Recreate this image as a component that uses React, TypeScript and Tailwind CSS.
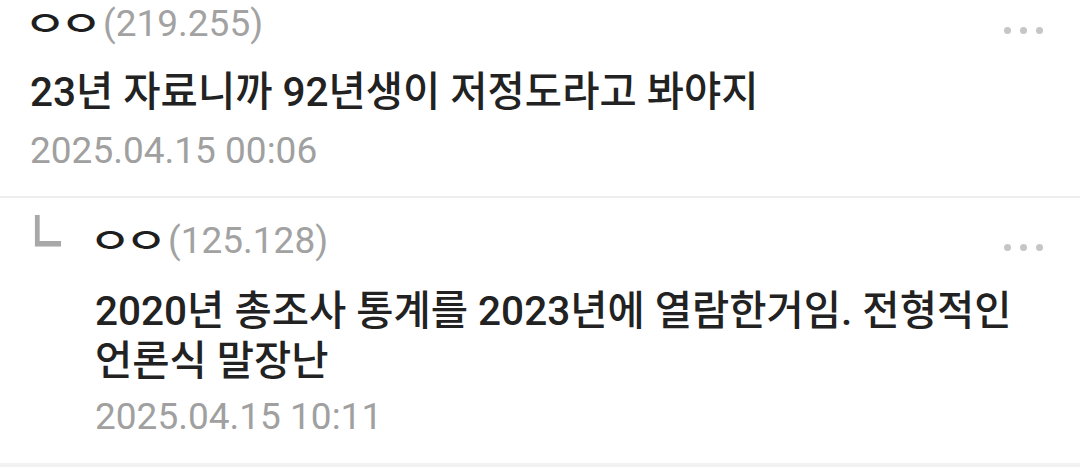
import React from 'react';

type Comment = {
	nick: string;
	ip: string;
	body: string;
	date: string;
	reply?: boolean;
};

const comments: Comment[] = [
	{
		nick: 'ㅇㅇ',
		ip: '(219.255)',
		body: '23년 자료니까 92년생이 저정도라고 봐야지',
		date: '2025.04.15 00:06',
	},
	{
		nick: 'ㅇㅇ',
		ip: '(125.128)',
		body: '2020년 총조사 통계를 2023년에 열람한거임. 전형적인 언론식 말장난',
		date: '2025.04.15 10:11',
		reply: true,
	},
];

const MoreDots = () => (
	<div className="flex gap-[9px] mt-[12px]">
		<span className="w-[7px] h-[7px] rounded-full bg-[#c6c6c6]" />
		<span className="w-[7px] h-[7px] rounded-full bg-[#c6c6c6]" />
		<span className="w-[7px] h-[7px] rounded-full bg-[#c6c6c6]" />
	</div>
);

// nickname glyphs sit in fixed cells so the jamo keep an even pitch
const Nick = ({ text }: { text: string }) => (
	<span className="flex -ml-[3px]">
		{text.split('').map((ch, i) => (
			<span
				key={i}
				className="w-[36px] flex justify-center text-[#1e1e1e] text-[47px] leading-[48px] font-medium scale-y-[0.72]"
			>
				{ch}
			</span>
		))}
	</span>
);

const CommentBody = ({ c }: { c: Comment }) => (
	<div className="flex-1 min-w-0">
		<div className="flex justify-between items-center h-[48px]">
			<div className="flex items-center gap-[4px] text-[37px] leading-[48px]">
				<Nick text={c.nick} />
				<span className="text-[#a2a2a2]">{c.ip}</span>
			</div>
			<MoreDots />
		</div>
		<p
			className={
				'text-[40.5px] leading-[50px] font-medium text-[#222222] break-keep ' +
				(c.reply ? 'mt-[21px]' : 'mt-[19px]')
			}
		>
			{c.body}
		</p>
		<div
			className={
				'text-[37px] leading-[44px] text-[#a0a0a0] ' +
				(c.reply ? 'mt-[9px]' : 'mt-[12px]')
			}
		>
			{c.date}
		</div>
	</div>
);

export default function App() {
	return (
		<div className="w-[1080px] h-[467px] bg-white overflow-hidden font-['Roboto','Noto_Sans_CJK_KR',sans-serif]">
			<div className="pl-[30px] pr-[37px] pb-[23px] border-b-2 border-[#eeeeee]">
				<CommentBody c={comments[0]} />
			</div>
			<div className="flex pt-[19px] pb-[24px] pr-[37px] border-b-4 border-[#f2f2f2]">
				<div className="w-[95px] shrink-0 pl-[27px] -mt-[7px]">
					<span className="inline-block origin-left scale-x-[0.68] text-[66px] leading-[48px] font-medium text-[#a8a8a8]">
						ㄴ
					</span>
				</div>
				<CommentBody c={comments[1]} />
			</div>
		</div>
	);
}
